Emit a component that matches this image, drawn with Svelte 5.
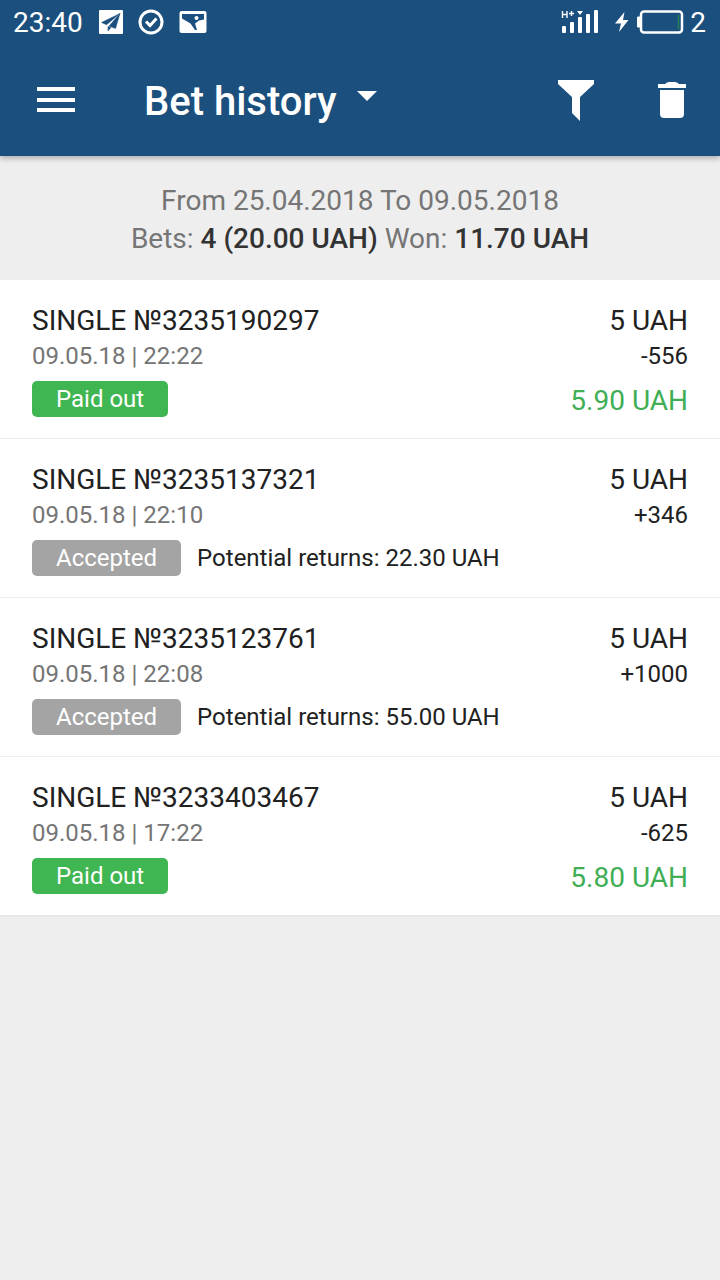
<script>
  const bets = [
    { id: '3235190297', date: '09.05.18 | 22:22', stake: '5 UAH', odds: '-556', status: 'Paid out', won: '5.90 UAH' },
    { id: '3235137321', date: '09.05.18 | 22:10', stake: '5 UAH', odds: '+346', status: 'Accepted', potential: '22.30 UAH' },
    { id: '3235123761', date: '09.05.18 | 22:08', stake: '5 UAH', odds: '+1000', status: 'Accepted', potential: '55.00 UAH' },
    { id: '3233403467', date: '09.05.18 | 17:22', stake: '5 UAH', odds: '-625', status: 'Paid out', won: '5.80 UAH' }
  ];
</script>

<div class="screen">
  <header>
    <div class="status">
      <span class="time">23:40</span>
      <svg class="telegram" width="26" height="26" viewBox="0 0 26 26" aria-hidden="true">
        <rect x="1" y="1" width="24" height="24" rx="1" fill="#fff" />
        <path d="M22 4.500 3.500 13.500l5 2.200L22 4.500 11 17l6.500 2.500zM10 17.500V22l3-3.500z" fill="#1b4f7d" stroke="#1b4f7d" stroke-width="0.5" />
      </svg>
      <svg class="check" width="26" height="26" viewBox="0 0 26 26" fill="none" stroke="#fff" stroke-width="3" aria-hidden="true">
        <circle cx="13" cy="13" r="11" />
        <path d="m8 12.500 4 4 6.500-7" />
      </svg>
      <svg class="gallery" width="28" height="24" viewBox="0 0 28 24" aria-hidden="true">
        <rect x="0.5" y="1" width="27" height="22" rx="2" fill="#fff" />
        <path d="M3 4h22v5.500l-5 1-4 3 2 6.500h-2l-4.500-6.500L3 8.500z" fill="#1b4f7d" />
        <circle cx="17.500" cy="8" r="2" fill="#fff" />
      </svg>
      <span class="spacer"></span>
      <svg class="signal" width="40" height="26" viewBox="0 0 40 26" fill="#fff" aria-hidden="true">
        <rect x="1" y="17" width="4" height="7" rx="1" />
        <rect x="9" y="13" width="4" height="11" rx="1" />
        <rect x="17" y="8" width="4" height="16" rx="1" />
        <rect x="25" y="5" width="4" height="19" rx="1" />
        <rect x="33" y="1" width="4" height="23" rx="1" />
        <path d="M16 2h6l-3 4z" />
        <path d="M1.500 2v7M6 2v7M1.500 5.500H6M8 4.500h5M10.500 2v5" fill="none" stroke="#fff" stroke-width="1.400" />
      </svg>
      <svg class="battery" width="70" height="26" viewBox="0 0 70 26" aria-hidden="true">
        <path d="M9.500 3 0 14.500h6L4 23l9.500-12H8z" fill="#fff" />
        <path d="M25 8h-2.500v10H25z" fill="#fff" stroke="#fff" stroke-width="1" />
        <rect x="26" y="2.500" width="41" height="21" rx="3" fill="none" stroke="#fff" stroke-width="2.500" />
        <path d="M63.500 5.500v15" stroke="#248352" stroke-width="1.500" />
      </svg>
      <span class="level">2</span>
    </div>
    <div class="bar">
      <button class="menu" aria-label="Open menu">
        <svg width="38" height="26" viewBox="0 0 38 26" fill="#fff"><path d="M0 0h38v4H0zM0 11h38v4H0zM0 21h38v4H0z" /></svg>
      </button>
      <h1>
        <button class="title">Bet history
          <svg width="20" height="10" viewBox="0 0 20 10" fill="#fff" aria-hidden="true"><path d="M0 0h20L10 10z" /></svg>
        </button>
      </h1>
      <button class="filter" aria-label="Filter">
        <svg width="38" height="42" viewBox="0 0 38 42" fill="#fff"><path d="M1 1h36v4L23 18v24l-8-8V18L1 5z" /></svg>
      </button>
      <button class="trash" aria-label="Delete">
        <svg width="28" height="38" viewBox="0 0 28 38" fill="#fff"><path d="M0 3h7q2-2 4-2h6q2 0 4 2h7v4H0zM2 9h24v24q0 4-4 4H6q-4 0-4-4z" /></svg>
      </button>
    </div>
  </header>

  <section class="summary">
    <p>From 25.04.2018 To 09.05.2018</p>
    <p>Bets: <strong>4 (20.00 UAH)</strong> Won: <strong>11.70 UAH</strong></p>
  </section>

  <ul>
    {#each bets as bet (bet.id)}
      <li>
        <div class="line">
          <span>SINGLE №{bet.id}</span>
          <span>{bet.stake}</span>
        </div>
        <div class="line small">
          <span class="date">{bet.date}</span>
          <span>{bet.odds}</span>
        </div>
        <div class="line result">
          <span class="badge" class:paid={bet.won}>{bet.status}</span>
          {#if bet.potential}
            <span class="potential">Potential returns: {bet.potential}</span>
          {:else}
            <span class="won">{bet.won}</span>
          {/if}
        </div>
      </li>
    {/each}
  </ul>
</div>

<style>
  :global(body) {
    margin: 0;
    background: #eee;
  }
  .screen {
    min-height: 100vh;
    background: #eee;
    color: #212121;
    font-family: Roboto, sans-serif;
    font-size: 28px;
  }
  svg {
    display: block;
    flex: none;
  }
  header {
    position: relative;
    padding-bottom: 8px;
    background: #1b4f7d;
    color: #fff;
    box-shadow: 0 2px 6px rgba(0, 0, 0, 0.3);
  }
  .status {
    display: flex;
    align-items: center;
    height: 44px;
    padding: 0 14px 0 13px;
  }
  .telegram {
    margin-left: 15px;
  }
  .check {
    margin-left: 14px;
  }
  .gallery {
    margin-left: 15px;
  }
  .spacer {
    flex: 1;
  }
  .signal {
    margin-right: 14px;
  }
  .battery {
    margin-right: 5px;
  }
  .bar {
    display: flex;
    align-items: center;
    height: 104px;
    padding: 0 12px 0 20px;
    box-sizing: border-box;
  }
  button {
    display: flex;
    align-items: center;
    justify-content: center;
    padding: 0;
    border: 0;
    background: none;
    color: inherit;
    font: inherit;
    cursor: pointer;
  }
  .menu,
  .filter,
  .trash {
    width: 72px;
    height: 96px;
    padding-top: 8px;
  }
  .filter {
    margin-right: 24px;
  }
  h1 {
    flex: 1;
    margin: 0 0 0 52px;
    font-size: 40px;
    font-weight: 500;
    line-height: 48px;
  }
  .title {
    gap: 20px;
    padding-top: 12px;
  }
  .title svg {
    margin-bottom: 12px;
  }
  .summary {
    padding: 26px 16px 22px;
    color: #757575;
    text-align: center;
    line-height: 38px;
  }
  p {
    margin: 0;
  }
  strong {
    color: #333;
    font-weight: 500;
  }
  ul {
    margin: 0;
    padding: 0;
    background: #fff;
    list-style: none;
    box-shadow: 0 1px 2px rgba(0, 0, 0, 0.05);
  }
  li {
    padding: 23px 32px 17px;
  }
  li + li {
    border-top: 1px solid #eee;
  }
  .line {
    display: flex;
    justify-content: space-between;
    line-height: 36px;
  }
  .small {
    font-size: 24px;
    line-height: 34px;
  }
  .date {
    color: #757575;
  }
  .result {
    gap: 16px;
    min-height: 40px;
    margin-top: 8px;
  }
  .badge {
    height: 36px;
    padding: 0 24px;
    border-radius: 5px;
    background: #a4a4a4;
    color: #fff;
    font-size: 24px;
  }
  .paid {
    background: #3fb651;
  }
  .potential {
    flex: 1;
    font-size: 24px;
  }
  .won {
    color: #3fae55;
    line-height: 40px;
  }
</style>
